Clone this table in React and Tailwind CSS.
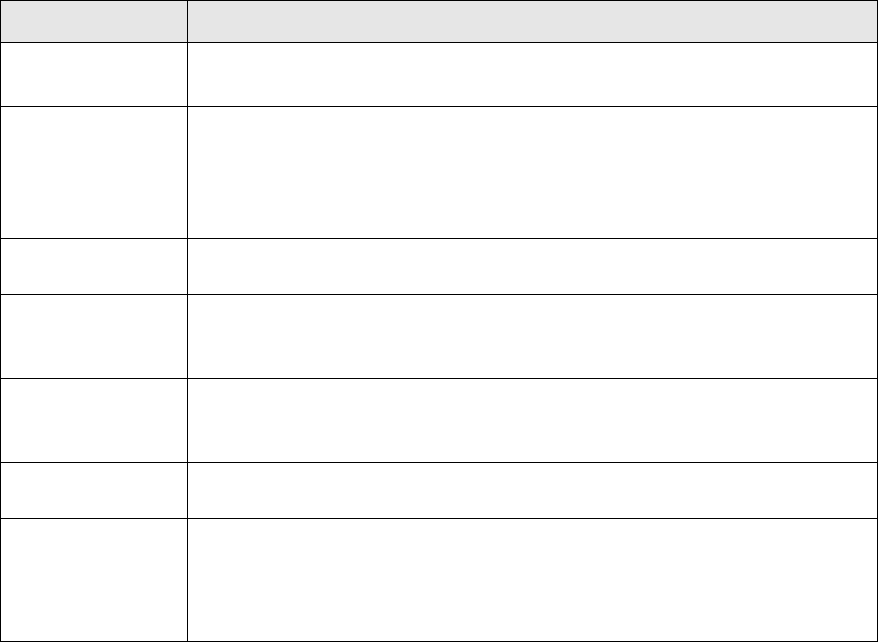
const rows = [
  { h: 'h-[64px]' },
  { h: 'h-[132px]' },
  { h: 'h-[56px]' },
  { h: 'h-[84px]' },
  { h: 'h-[84px]' },
  { h: 'h-[56px]' },
  { h: 'h-[122px]', last: true },
]

export default function App() {
  return (
    <div className="w-[878px] h-[643px] bg-white font-['Liberation_Sans',sans-serif] text-sm text-black">
      <div className="w-[878px] border border-black flex flex-col">
        {/* header */}
        <div className="h-[42px] flex border-b border-black bg-[#e6e6e6]">
          <div className="w-[187px] border-r border-black px-2 py-2 font-bold"></div>
          <div className="flex-1 px-2 py-2 font-bold"></div>
        </div>
        {rows.map((r, i) => (
          <div key={i} className={`${r.h} flex ${r.last ? '' : 'border-b border-black'}`}>
            <div className="w-[187px] border-r border-black px-2 py-2"></div>
            <div className="flex-1 px-2 py-2"></div>
          </div>
        ))}
      </div>
    </div>
  )
}
